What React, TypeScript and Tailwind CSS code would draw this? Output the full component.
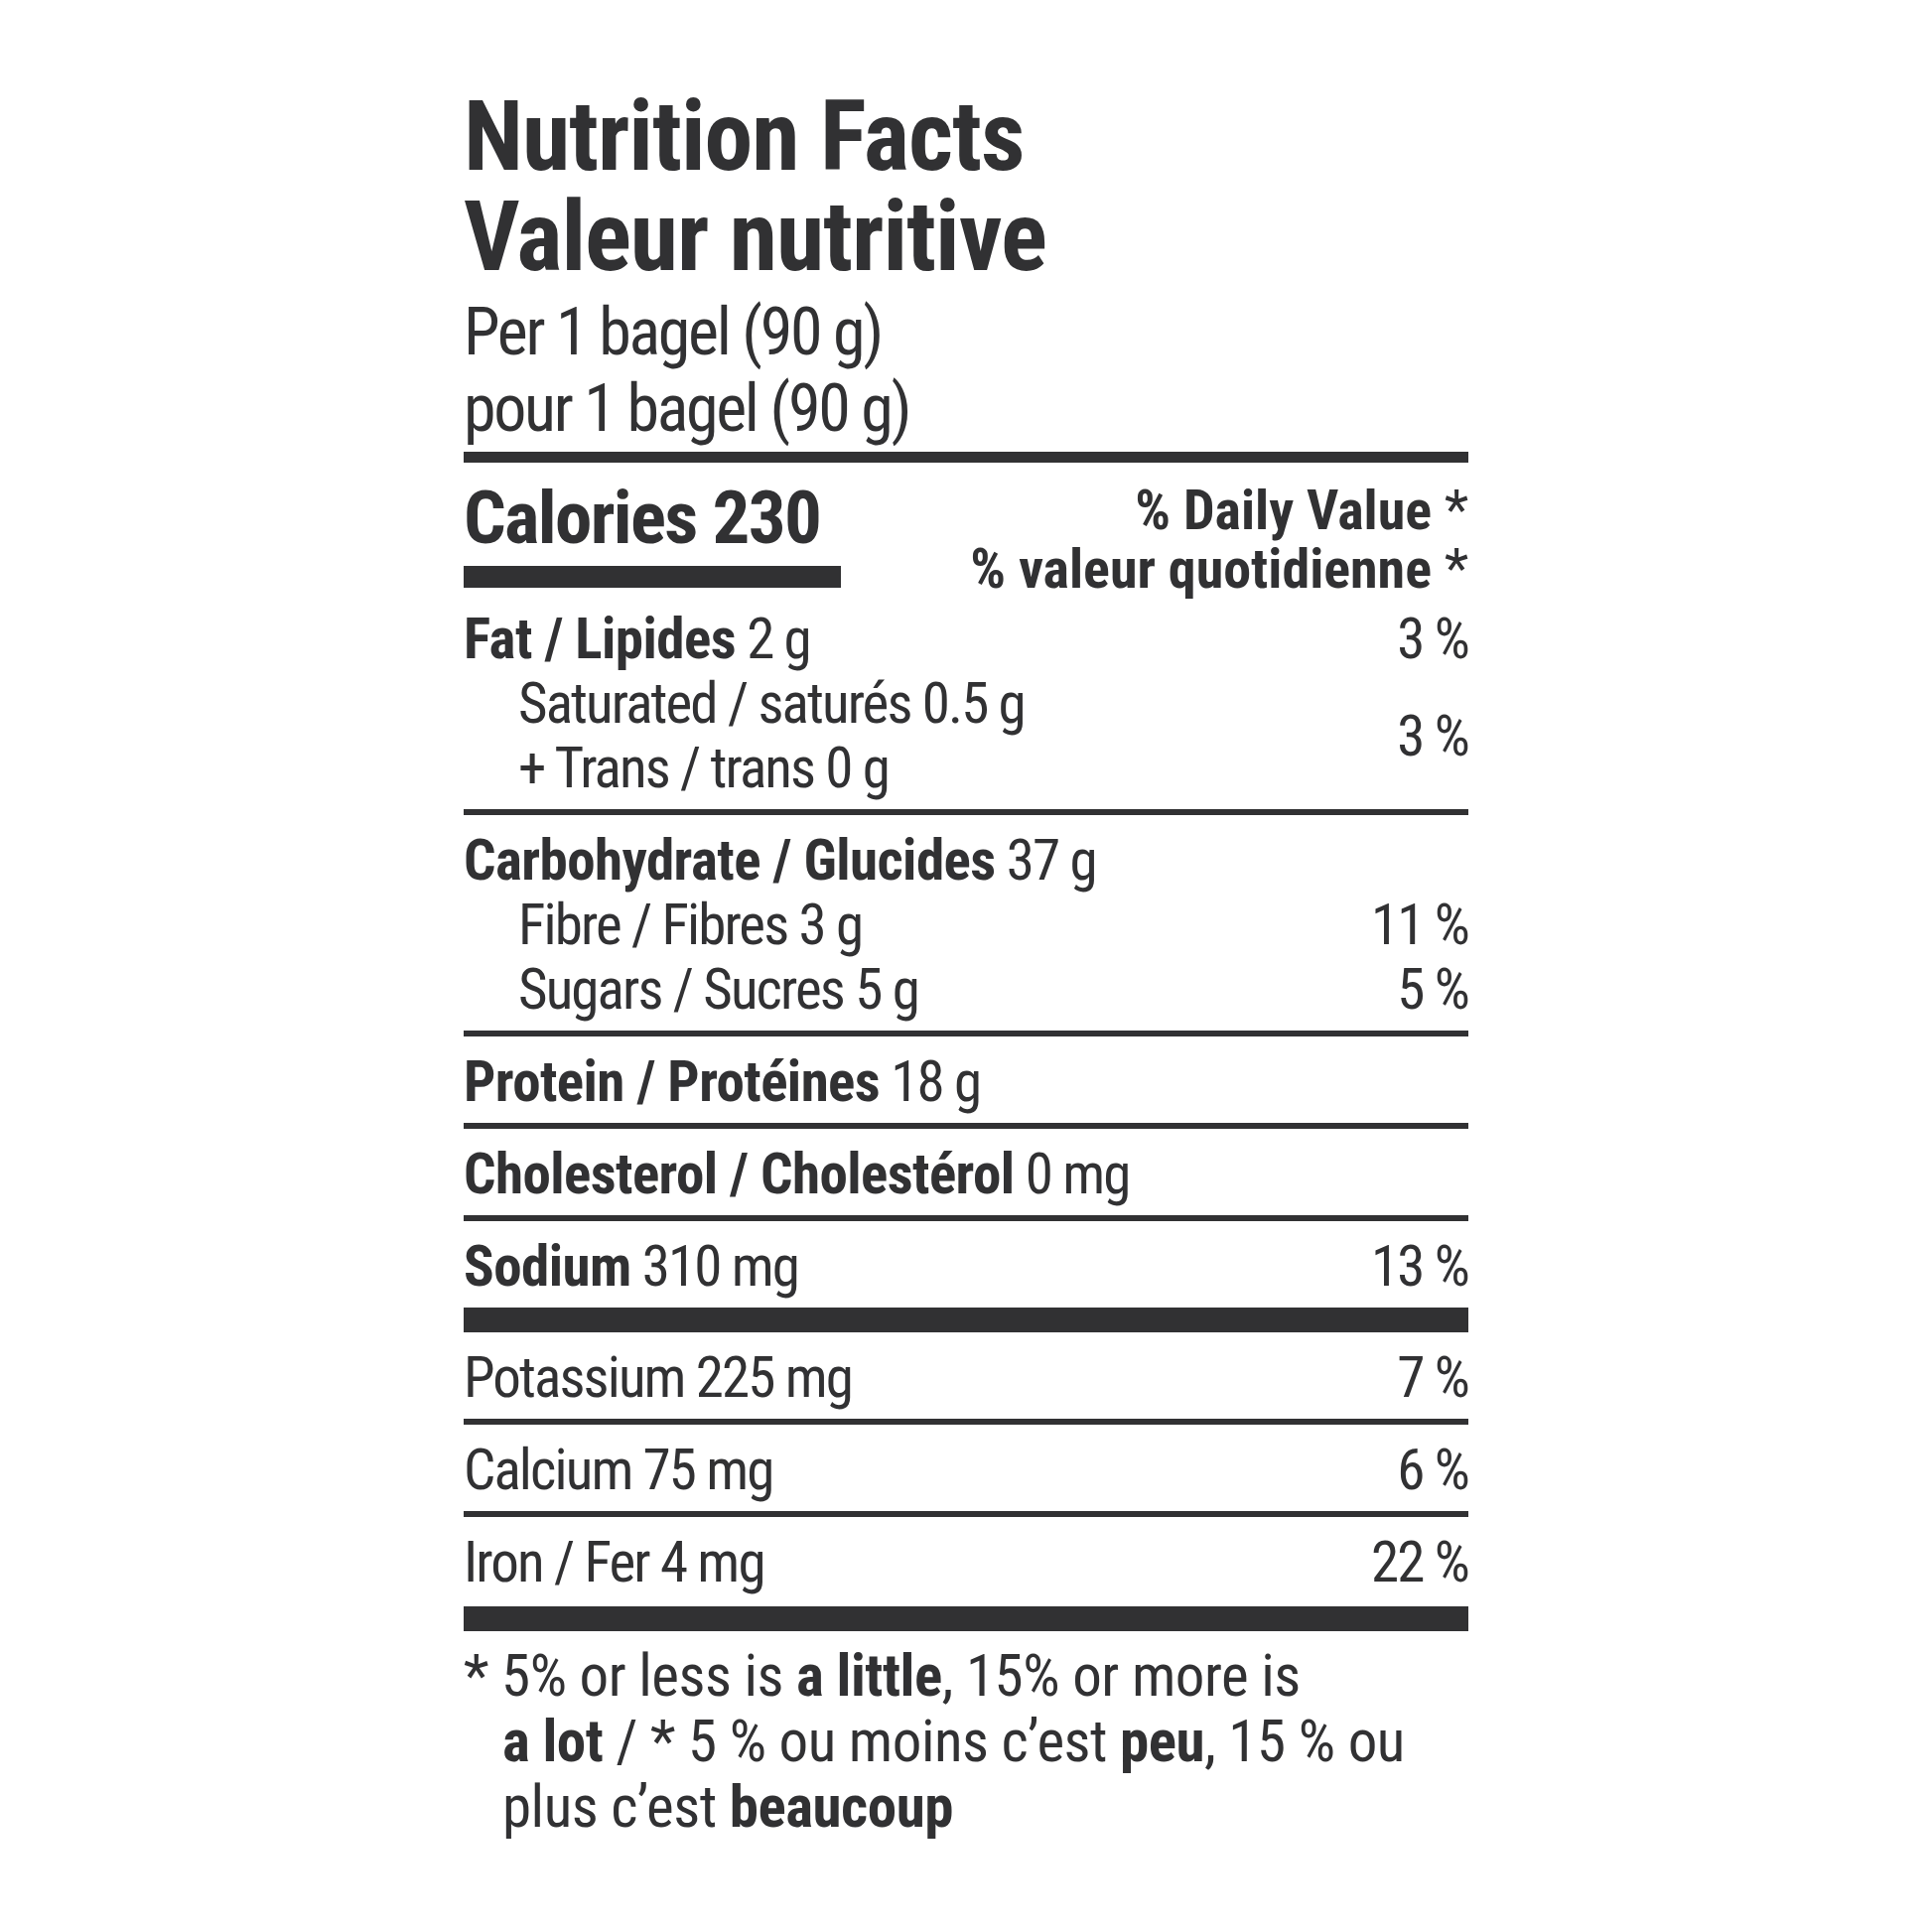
type Item = {
  bold?: string;
  rest: string;
  pct?: string;
};

const Rule = ({ thick }: { thick?: boolean }) => (
  <div className={thick ? "h-[25px] bg-[#313133]" : "h-[6px] bg-[#313133]"} />
);

const Line = ({ bold, rest, pct }: Item) => (
  <div className="flex justify-between">
    <span>
      {bold && <span className="font-bold tracking-[-0.01em]">{bold}</span>}
      {rest}
    </span>
    {pct && <span>{pct}</span>}
  </div>
);

const Section = ({ children, last }: { children: React.ReactNode; last?: boolean }) => (
  <div className={last ? "pt-[13px] pb-[12px]" : "pt-[13px] pb-[9px]"}>{children}</div>
);

export default function App() {
  return (
    <div className="min-h-screen bg-white font-['Roboto',sans-serif] font-stretch-condensed text-[#313133]">
      <div className="ml-[467px] w-[1012px] pt-[87px]">
        <h1 className="text-[98px] leading-[101px] font-bold tracking-[-0.011em]">
          Nutrition Facts
          <br />
          Valeur nutritive
        </h1>
        <div className="mt-[7px] text-[66px] leading-[77px] tracking-[-0.035em]">
          Per 1 bagel (90 g)
          <br />
          pour 1 bagel (90 g)
        </div>
        <div className="mt-[5px] h-[11px] bg-[#313133]" />

        <div className="flex justify-between items-start pt-[15px]">
          <div>
            <div className="text-[75px] leading-[80px] font-bold tracking-[-0.022em]">Calories 230</div>
            <div className="mt-[9px] h-[22px] w-[380px] bg-[#313133]" />
          </div>
          <div className="mt-[4px] text-right text-[56px] leading-[59px] font-bold">
            % Daily Value <span className="font-normal">*</span>
            <br />
            % valeur quotidienne <span className="font-normal">*</span>
          </div>
        </div>

        <div className="text-[57px] leading-[65px] tracking-[-0.033em]">
          <div className="pt-[8px] pb-[9px]">
            <Line bold="Fat / Lipides" rest=" 2 g" pct="3 %" />
            <div className="flex justify-between items-center pl-[55px]">
              <div>
                Saturated / saturés 0.5 g
                <br />+ Trans / trans 0 g
              </div>
              <span>3 %</span>
            </div>
          </div>
          <Rule />
          <Section>
            <Line bold="Carbohydrate / Glucides" rest=" 37 g" />
            <div className="pl-[55px]">
              <Line rest="Fibre / Fibres 3 g" pct="11 %" />
              <Line rest="Sugars / Sucres 5 g" pct="5 %" />
            </div>
          </Section>
          <Rule />
          <Section>
            <Line bold="Protein / Protéines" rest=" 18 g" />
          </Section>
          <Rule />
          <Section>
            <Line bold="Cholesterol / Cholestérol" rest=" 0 mg" />
          </Section>
          <Rule />
          <Section>
            <Line bold="Sodium" rest=" 310 mg" pct="13 %" />
          </Section>
          <Rule thick />
          <Section>
            <Line rest="Potassium 225 mg" pct="7 %" />
          </Section>
          <Rule />
          <Section>
            <Line rest="Calcium 75 mg" pct="6 %" />
          </Section>
          <Rule />
          <Section last>
            <Line rest="Iron / Fer 4 mg" pct="22 %" />
          </Section>
          <Rule thick />
        </div>

        <p className="mt-[12px] pl-[39px] -indent-[39px] text-[59px] leading-[66px] tracking-[-0.008em]">
          * 5% or less is <span className="font-bold">a little</span>, 15% or more is
          <br />
          <span className="font-bold">a lot</span> / * 5 % ou moins c’est{" "}
          <span className="font-bold">peu</span>, 15 % ou
          <br />
          plus c’est <span className="font-bold">beaucoup</span>
        </p>
      </div>
    </div>
  );
}
